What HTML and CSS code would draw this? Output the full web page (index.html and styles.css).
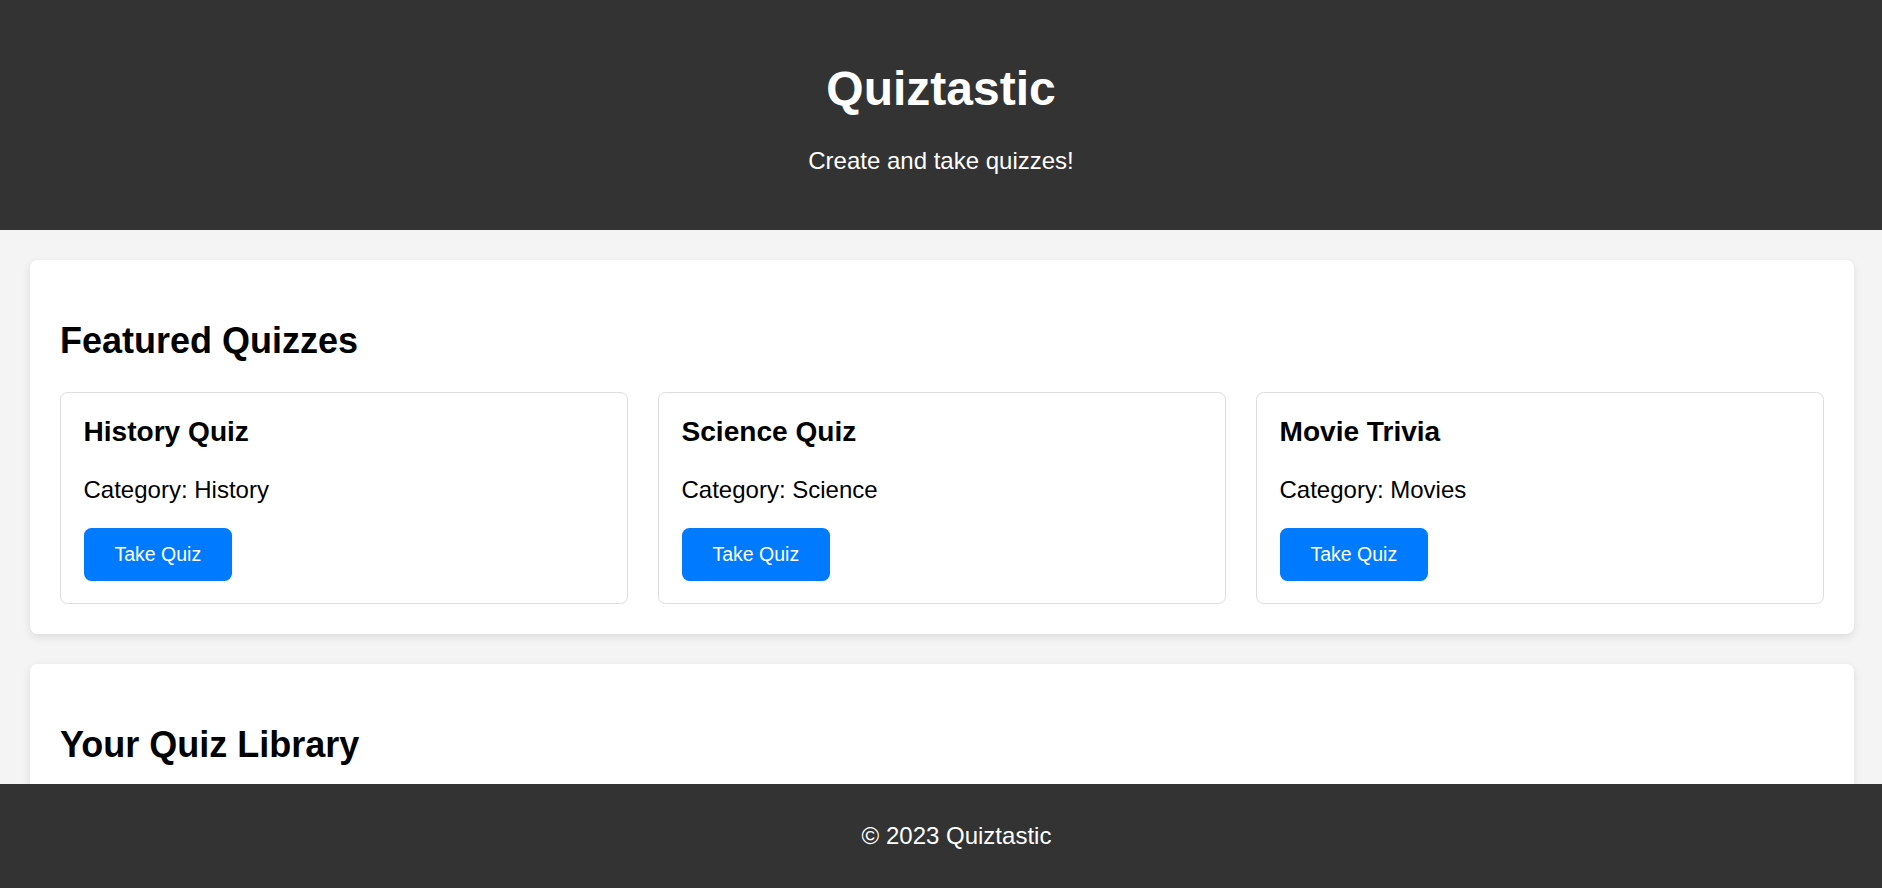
FILE: index.html
```html
<!DOCTYPE html>
<html lang="en">
<head>
<meta charset="utf-8">
<title>Quiztastic</title>
<link rel="stylesheet" href="styles.css">
</head>
<body>
<header class="site-header">
  <h1 class="site-title">Quiztastic</h1>
  <p class="site-tagline">Create and take quizzes!</p>
</header>
<main class="main">
  <section class="panel">
    <h2 class="panel-title">Featured Quizzes</h2>
    <div class="quiz-grid">
      <div class="quiz-card">
        <h3 class="quiz-name">History Quiz</h3>
        <p class="quiz-meta">Category: History</p>
        <button class="quiz-btn">Take Quiz</button>
      </div>
      <div class="quiz-card">
        <h3 class="quiz-name">Science Quiz</h3>
        <p class="quiz-meta">Category: Science</p>
        <button class="quiz-btn">Take Quiz</button>
      </div>
      <div class="quiz-card">
        <h3 class="quiz-name">Movie Trivia</h3>
        <p class="quiz-meta">Category: Movies</p>
        <button class="quiz-btn">Take Quiz</button>
      </div>
    </div>
  </section>
  <section class="panel">
    <h2 class="panel-title">Your Quiz Library</h2>
    <div class="quiz-grid"></div>
  </section>
</main>
<footer class="site-footer">&copy; 2023 Quiztastic</footer>
</body>
</html>
```

FILE: styles.css
```css
html, body {
  margin: 0;
  padding: 0;
}

body {
  font-family: "Liberation Sans", Arial, sans-serif;
  font-size: 24px;
  background: #f4f4f4;
  color: #000;
}

.site-header {
  background: #333333;
  color: #fff;
  text-align: center;
  padding: 30px 30px;
}

.site-title {
  font-size: 48px;
  font-weight: bold;
  margin: 31px 0 31px;
}

.site-tagline {
  font-size: 24px;
  margin: 0 0 25px;
}

.main {
  padding: 30px 28px 30px 30px;
}

.panel {
  background: #fff;
  border-radius: 8px;
  box-shadow: 0 3px 8px rgba(0, 0, 0, 0.1);
  padding: 30px;
  margin-bottom: 30px;
}

.panel-title {
  font-size: 36px;
  font-weight: bold;
  margin: 30px 0 30px;
}

.quiz-grid {
  display: grid;
  grid-template-columns: repeat(3, 1fr);
  gap: 30px;
}

.quiz-card {
  border: 1px solid #dddddd;
  border-radius: 7.5px;
  padding: 22.5px;
}

.quiz-name {
  font-size: 28.08px;
  font-weight: bold;
  margin: 0 0 28px;
}

.quiz-meta {
  font-size: 24px;
  margin: 0 0 24px;
}

.quiz-btn {
  display: inline-block;
  font-family: "Liberation Sans", Arial, sans-serif;
  font-size: 19.5px;
  color: #fff;
  background: #007bff;
  border: none;
  border-radius: 7.5px;
  padding: 15px 31px;
  line-height: normal;
  cursor: pointer;
}

.site-footer {
  position: fixed;
  left: 0;
  right: 0;
  bottom: 0;
  background: #333333;
  color: #fff;
  text-align: center;
  font-size: 24px;
  line-height: 28px;
  padding: 38px 0 38px 31px;
}
```
